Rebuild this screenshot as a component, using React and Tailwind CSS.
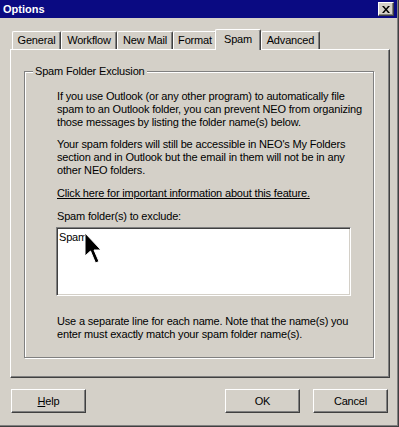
import React from 'react';

const FONT = "font-['Liberation_Sans',Arial,sans-serif]";

const TABS = ['General', 'Workflow', 'New Mail', 'Format', 'Spam', 'Advanced'];
const TAB_W = { General: 49, Workflow: 56, 'New Mail': 56, Format: 44, Spam: 46, Advanced: 59 };

function Tab({ label, active }) {
  if (active) {
    return (
      <div
        className="relative z-10 -ml-[2px] -mb-px flex h-[21px] items-start justify-center rounded-t-[2px] border-l border-t border-r border-l-white border-t-white border-r-[#404040] bg-[#d4d0c8] pt-[3px] shadow-[inset_-1px_0_0_#808080]"
        style={{ width: TAB_W[label] }}
      >
        {label}
      </div>
    );
  }
  return (
    <div
      className="flex h-[18px] items-center justify-center whitespace-nowrap rounded-t-[2px] border-l border-t border-r border-l-white border-t-white border-r-[#404040] shadow-[inset_-1px_0_0_#808080]"
      style={{ width: TAB_W[label] }}
    >
      {label}
    </div>
  );
}

function Button({ children }) {
  return (
    <button className="flex h-[24px] w-[75px] items-center justify-center border border-l-white border-t-white border-r-[#404040] border-b-[#404040] bg-[#d4d0c8] shadow-[inset_-1px_-1px_0_#808080]">
      {children}
    </button>
  );
}

function Cursor() {
  return (
    <svg className="absolute left-[27px] top-[4px]" width="20" height="34" viewBox="0 0 20 34">
      <polygon
        points="1,1 1,24 6.5,19 11.5,31 15,29.5 10,18 17,18"
        fill="#000"
        stroke="#fff"
        strokeWidth="1"
      />
    </svg>
  );
}

export default function App() {
  return (
    <div className={`h-[427px] w-[399px] bg-[#404040] pb-px pr-px text-[11px] leading-[13px] tracking-[-0.17px] text-black ${FONT}`}>
      <div className="h-full bg-[#808080] pb-px pr-px">
        <div className="flex h-full flex-col bg-[#d4d0c8]">
          {/* title bar */}
          <div className="flex h-[18px] items-center justify-between bg-[#0a0a82] pl-[3px] pr-[3px]">
            <span className="text-[11px] font-bold tracking-normal text-white">Options</span>
            <div className="flex h-[14px] w-[16px] items-center justify-center border border-l-white border-t-white border-r-[#404040] border-b-[#404040] bg-[#d4d0c8] shadow-[inset_-1px_-1px_0_#808080]">
              <svg width="8" height="7" viewBox="0 0 8 7">
                <path d="M0 0h2l2 2.5L6 0h2L5 3.5 8 7H6L4 4.5 2 7H0l3-3.5z" fill="#000" />
              </svg>
            </div>
          </div>

          {/* tabs */}
          <div className="ml-[12px] mt-[11px] flex h-[20px] items-end">
            {TABS.map((t) => (
              <Tab key={t} label={t} active={t === 'Spam'} />
            ))}
          </div>

          {/* panel */}
          <div className="ml-[10px] h-[329px] w-[380px] border border-l-white border-t-white border-r-[#404040] border-b-[#404040] shadow-[inset_-1px_-1px_0_#808080]">
            <div className="relative ml-[13px] mt-[21px] h-[287px] w-[350px] border border-[#808080] pl-[31px] pt-[18px] shadow-[1px_1px_0_#fff,inset_1px_1px_0_#fff]">
              <span className="absolute left-[8px] top-[-7px] bg-[#d4d0c8] px-[2px]">Spam Folder Exclusion</span>

              <p className="whitespace-nowrap pl-px">
                If you use Outlook (or any other program) to automatically file
                <br />
                spam to an Outlook folder, you can prevent NEO from organizing
                <br />
                those messages by listing the folder name(s) below.
              </p>
              <p className="mt-[9px] whitespace-nowrap pl-px">
                Your spam folders will still be accessible in NEO's My Folders
                <br />
                section and in Outlook but the email in them will not be in any
                <br />
                other NEO folders.
              </p>
              <p className="mt-[10px] whitespace-nowrap pl-px underline">
                Click here for important information about this feature.
              </p>
              <p className="mt-[10px] pl-px">Spam folder(s) to exclude:</p>

              <div className="relative mt-[4px] h-[69px] w-[295px] border border-l-[#808080] border-t-[#808080] border-r-white border-b-white bg-white pl-[2px] pt-[3px] shadow-[inset_1px_1px_0_#404040,inset_-1px_-1px_0_#d4d0c8]">
                Spam
                <Cursor />
              </div>

              <p className="mt-[19px] whitespace-nowrap pl-px">
                Use a separate line for each name. Note that the name(s) you
                <br />
                enter must exactly match your spam folder name(s).
              </p>
            </div>
          </div>

          {/* buttons */}
          <div className="mt-[11px] flex items-center justify-between pl-[11px] pr-[9px]">
            <Button>
              <span>
                <span className="underline">H</span>elp
              </span>
            </Button>
            <div className="flex gap-[13px]">
              <Button>OK</Button>
              <Button>Cancel</Button>
            </div>
          </div>
        </div>
      </div>
    </div>
  );
}
